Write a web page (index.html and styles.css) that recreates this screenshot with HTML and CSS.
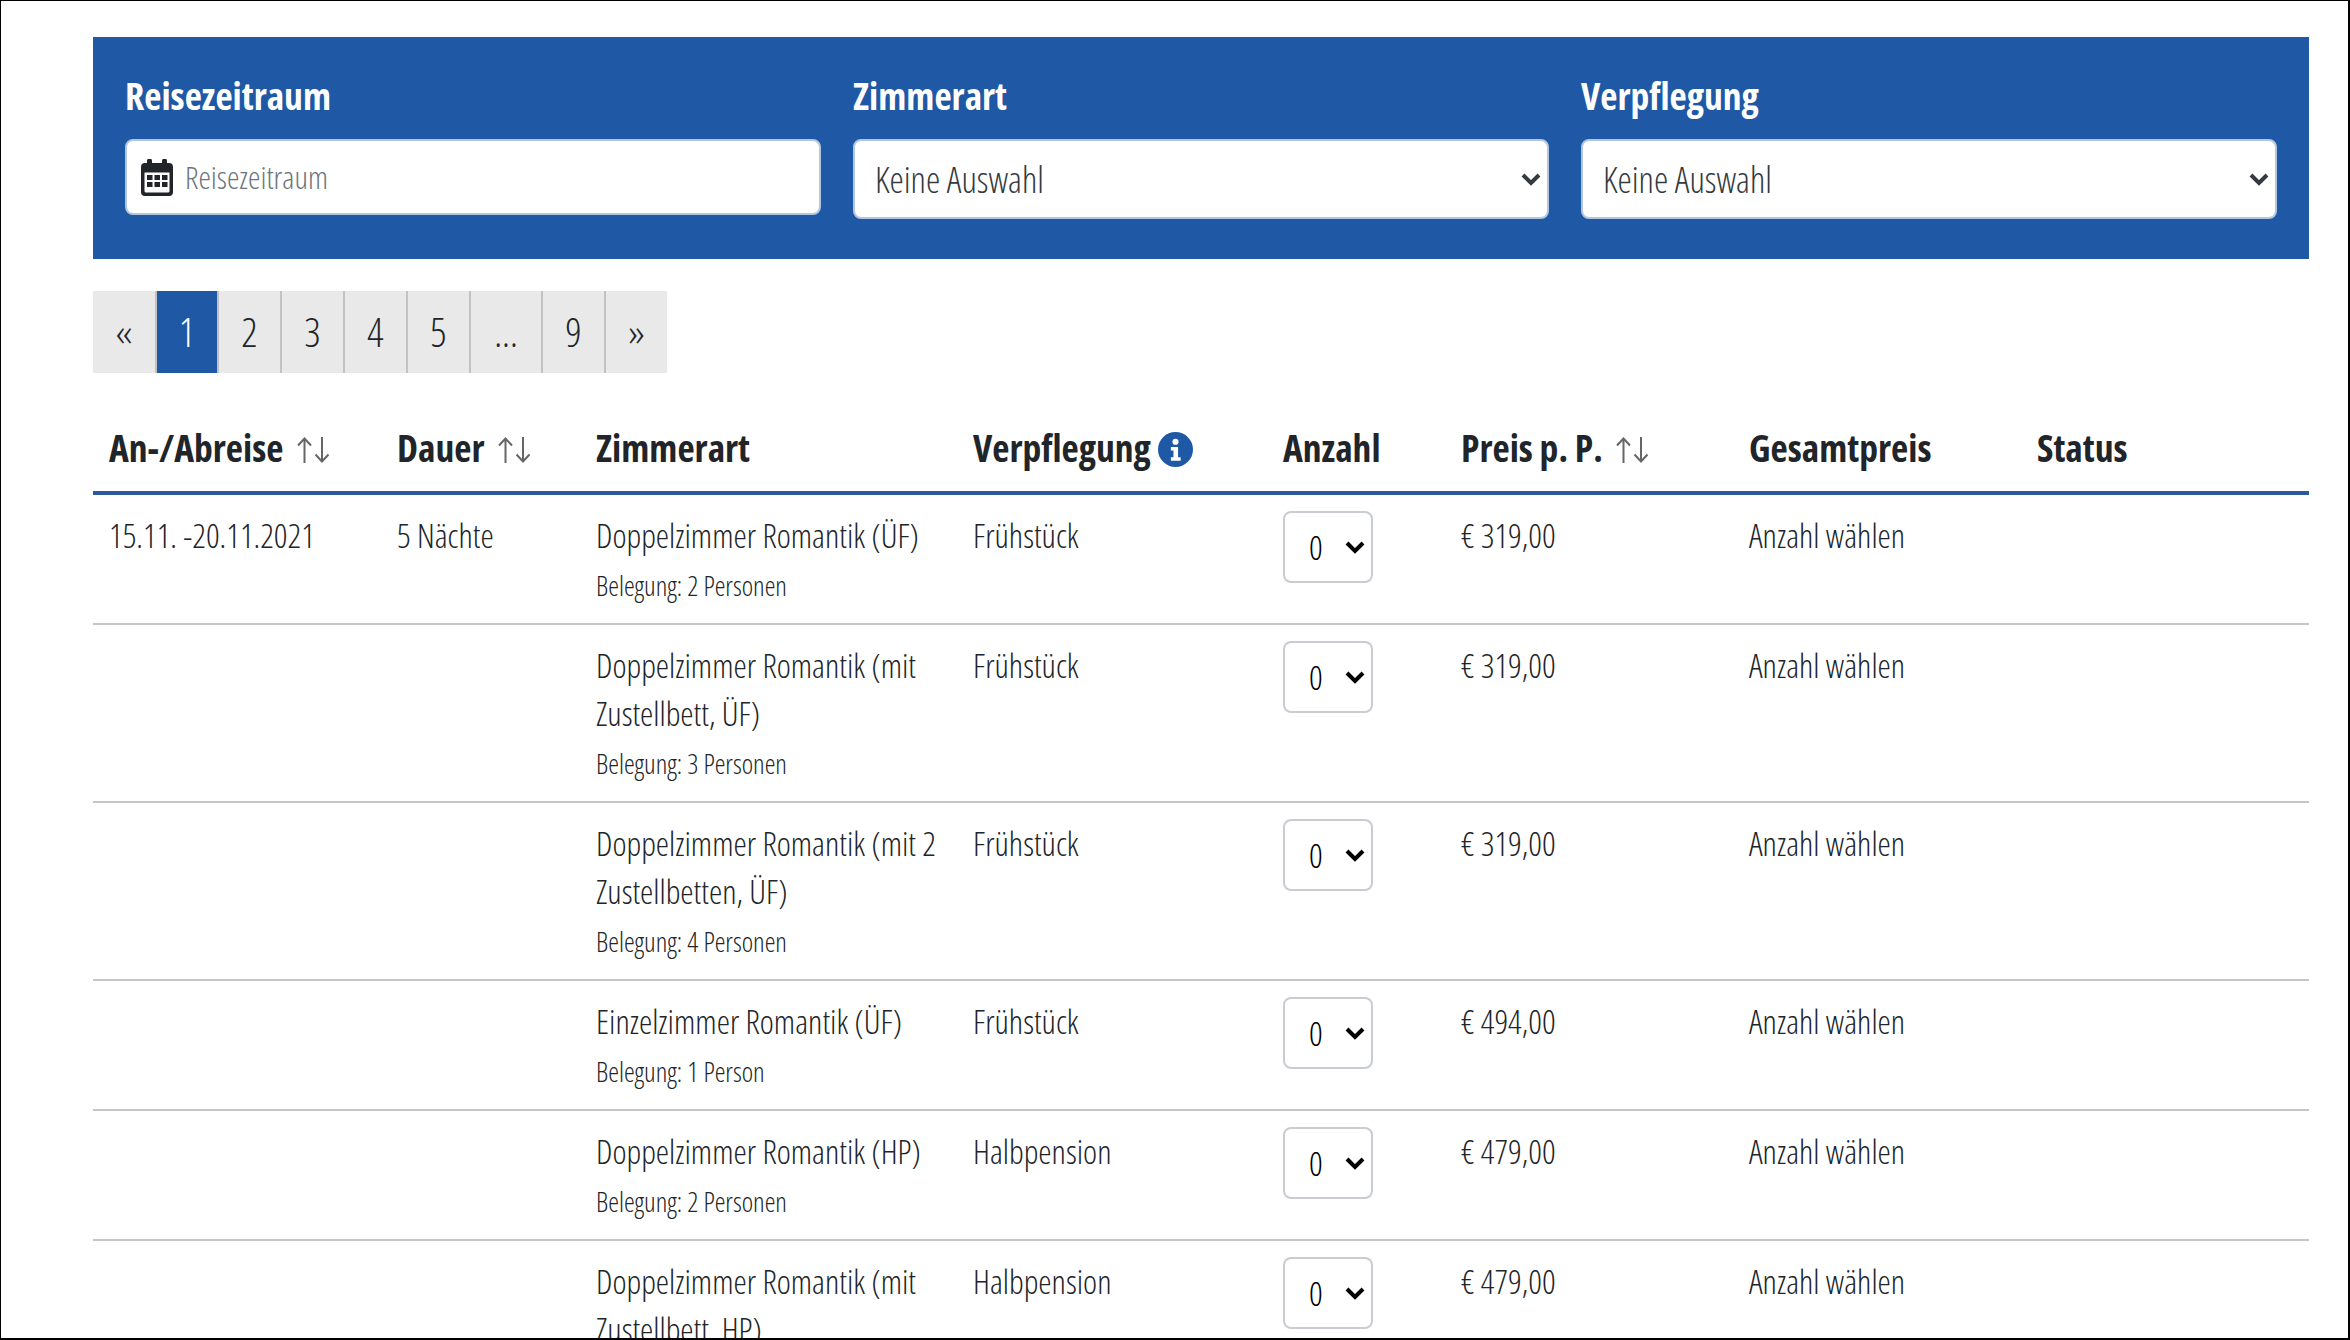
FILE: index.html
```html
<!DOCTYPE html>
<html lang="de">
<head>
    <meta charset="UTF-8">
    <title>Reisezeitraum</title>
    <link rel="stylesheet" href="styles.css">
</head>
<body>
    <div class="container">
        <form class="filter">
            <div class="filter-col">
                <label for="zeitraum">Reisezeitraum</label>
                <div class="date-input">
                    <svg class="cal-icon" viewBox="0 0 32 37"><path fill-rule="evenodd" d="M6 2a2.500 2.500 0 0 1 5 0v2h10V2a2.500 2.500 0 0 1 5 0v2h2a4 4 0 0 1 4 4v25a4 4 0 0 1-4 4H4a4 4 0 0 1-4-4V8a4 4 0 0 1 4-4h2V2zM3.500 13.500V32a1.500 1.500 0 0 0 1.500 1.500h22a1.500 1.500 0 0 0 1.500-1.500V13.500h-25zM6 16h5.500v5H6zm7.500 0H19v5h-5.500zM21 16h5.500v5H21zM6 23h5.500v5H6zm7.500 0H19v5h-5.500zM21 23h5.500v5H21z"/></svg>
                    <input id="zeitraum" type="text" placeholder="Reisezeitraum">
                </div>
            </div>
            <div class="filter-col">
                <label for="zimmerart">Zimmerart</label>
                <select id="zimmerart" class="filter-select"><option>Keine Auswahl</option></select>
            </div>
            <div class="filter-col">
                <label for="verpflegung">Verpflegung</label>
                <select id="verpflegung" class="filter-select"><option>Keine Auswahl</option></select>
            </div>
        </form>

        <ul class="pagination">
            <li>«</li>
            <li class="active">1</li>
            <li>2</li>
            <li>3</li>
            <li>4</li>
            <li>5</li>
            <li class="wide">...</li>
            <li>9</li>
            <li>»</li>
        </ul>

        <table class="offers">
            <colgroup>
                <col class="c-date"><col class="c-dauer"><col class="c-zimmer"><col class="c-verpf">
                <col class="c-anzahl"><col class="c-preis"><col class="c-gesamt"><col class="c-status">
            </colgroup>
            <thead>
                <tr>
                    <th>An-/Abreise <svg class="sort" viewBox="0 0 33 26"><path d="M7.500 26V2M1 8.500l6.500-7 6.500 7M25 0v24M18.500 17.500l6.500 7 6.500-7"/></svg></th>
                    <th>Dauer <svg class="sort" viewBox="0 0 33 26"><path d="M7.500 26V2M1 8.500l6.500-7 6.500 7M25 0v24M18.500 17.500l6.500 7 6.500-7"/></svg></th>
                    <th>Zimmerart</th>
                    <th>Verpflegung <svg class="info" viewBox="0 0 34 34"><circle cx="17" cy="17" r="17"/><circle class="info-i" cx="17" cy="9.500" r="3"/><path class="info-i" d="M12.500 14.500h7v10h2.500v3.500h-9.500v-3.500h2.500v-6.500h-2.500z"/></svg></th>
                    <th>Anzahl</th>
                    <th>Preis p. P. <svg class="sort" viewBox="0 0 33 26"><path d="M7.500 26V2M1 8.500l6.500-7 6.500 7M25 0v24M18.500 17.500l6.500 7 6.500-7"/></svg></th>
                    <th>Gesamtpreis</th>
                    <th>Status</th>
                </tr>
            </thead>
            <tbody>
                <tr>
                    <td>15.11. -20.11.2021</td>
                    <td>5 Nächte</td>
                    <td>Doppelzimmer Romantik (ÜF)<small>Belegung: 2 Personen</small></td>
                    <td>Frühstück</td>
                    <td><select class="qty"><option>0</option></select></td>
                    <td>€ 319,00</td>
                    <td>Anzahl wählen</td>
                    <td></td>
                </tr>
                <tr>
                    <td></td>
                    <td></td>
                    <td>Doppelzimmer Romantik (mit Zustellbett, ÜF)<small>Belegung: 3 Personen</small></td>
                    <td>Frühstück</td>
                    <td><select class="qty"><option>0</option></select></td>
                    <td>€ 319,00</td>
                    <td>Anzahl wählen</td>
                    <td></td>
                </tr>
                <tr>
                    <td></td>
                    <td></td>
                    <td>Doppelzimmer Romantik (mit 2 Zustellbetten, ÜF)<small>Belegung: 4 Personen</small></td>
                    <td>Frühstück</td>
                    <td><select class="qty"><option>0</option></select></td>
                    <td>€ 319,00</td>
                    <td>Anzahl wählen</td>
                    <td></td>
                </tr>
                <tr>
                    <td></td>
                    <td></td>
                    <td>Einzelzimmer Romantik (ÜF)<small>Belegung: 1 Person</small></td>
                    <td>Frühstück</td>
                    <td><select class="qty"><option>0</option></select></td>
                    <td>€ 494,00</td>
                    <td>Anzahl wählen</td>
                    <td></td>
                </tr>
                <tr>
                    <td></td>
                    <td></td>
                    <td>Doppelzimmer Romantik (HP)<small>Belegung: 2 Personen</small></td>
                    <td>Halbpension</td>
                    <td><select class="qty"><option>0</option></select></td>
                    <td>€ 479,00</td>
                    <td>Anzahl wählen</td>
                    <td></td>
                </tr>
                <tr>
                    <td></td>
                    <td></td>
                    <td>Doppelzimmer Romantik (mit Zustellbett, HP)<small>Belegung: 3 Personen</small></td>
                    <td>Halbpension</td>
                    <td><select class="qty"><option>0</option></select></td>
                    <td>€ 479,00</td>
                    <td>Anzahl wählen</td>
                    <td></td>
                </tr>
            </tbody>
        </table>
    </div>
</body>
</html>
```

FILE: styles.css
```css
:root {
    --primary-color: #1f59a5;
    --text-color: #212529;
    --border-color: #c4c6c8;
    --page-item-bg: #e9e9e9;
}
html {
    height: 1340px;
    overflow: hidden;
}
body {
    height: 1340px;
    margin: 0;
    overflow: hidden;
    box-sizing: border-box;
    border: 2px solid #000;
    border-width: 1px 2px 2px 1px;
    font-family: "Open Sans", sans-serif;
    font-stretch: 75%;
    font-weight: 300;
    font-size: 33.6px;
    line-height: 48px;
    color: var(--text-color);
}
.container {
    padding: 36px 39px 0 92px;
}
.filter {
    display: grid;
    grid-template-columns: repeat(3, 1fr);
    gap: 32px;
    height: 222px;
    box-sizing: border-box;
    padding: 32px;
    background: var(--primary-color);
}
.filter-col label {
    display: block;
    height: 70px;
    font-size: 37.6px;
    line-height: 54px;
    font-weight: 700;
    color: #fff;
}
.date-input {
    display: flex;
    align-items: center;
    gap: 12px;
    height: 76px;
    box-sizing: border-box;
    padding: 0 14px;
    background: #fff;
    border: 2px solid #b3c6e0;
    border-radius: 8px;
}
.cal-icon {
    width: 32px;
    height: 37px;
    flex: none;
    fill: #212529;
}
.date-input input {
    flex: 1;
    min-width: 0;
    border: none;
    outline: none;
    padding: 0;
    font: inherit;
    font-size: 31.5px;
    font-stretch: 75%;
}
.date-input input::placeholder {
    color: #6c757d;
    opacity: 1;
}
.filter-select {
    display: block;
    width: 100%;
    height: 80px;
    padding: 2px 20px 0;
    background: #fff;
    border: 2px solid #b3c6e0;
    border-radius: 8px;
    font: inherit;
    font-size: 36px;
    font-stretch: 75%;
    color: #343a40;
    appearance: none;
    background-image: url("data:image/svg+xml,%3Csvg xmlns='http://www.w3.org/2000/svg' viewBox='0 0 20 14'%3E%3Cpath d='M2 3l8 8 8-8' fill='none' stroke='%23343a40' stroke-width='4'/%3E%3C/svg%3E");
    background-repeat: no-repeat;
    background-position: right 6px center;
    background-size: 20px 14px;
}
.pagination {
    display: flex;
    width: max-content;
    height: 82px;
    margin: 32px 0 34px;
    padding: 0;
    list-style: none;
}
.pagination li {
    width: 63px;
    box-sizing: border-box;
    text-align: center;
    line-height: 82px;
    font-size: 40px;
    background: var(--page-item-bg);
    border-left: 2px solid #c2c2c2;
}
.pagination li:first-child {
    width: 62px;
    border-left: none;
}
.pagination .active {
    width: 62px;
    background: var(--primary-color);
    color: #fff;
}
.pagination .wide {
    width: 72px;
}
.offers {
    width: 2216px;
    table-layout: fixed;
    border-collapse: collapse;
}
.c-date { width: 288px; }
.c-dauer { width: 199px; }
.c-zimmer { width: 377px; }
.c-verpf { width: 310px; }
.c-anzahl { width: 178px; }
.c-preis { width: 288px; }
.c-gesamt { width: 288px; }
.c-status { width: 288px; }
.offers th {
    height: 82px;
    padding: 0 16px 2px;
    text-align: left;
    font-size: 37.6px;
    font-weight: 700;
    line-height: 54px;
    white-space: nowrap;
    border-bottom: 4px solid #2a5a9b;
}
.offers td {
    padding: 16px;
    vertical-align: top;
    border-bottom: 2px solid var(--border-color);
}
.offers small {
    display: block;
    margin-top: 6px;
    font-size: 27.2px;
    line-height: 42px;
}
.sort {
    width: 33px;
    height: 26px;
    margin-left: 7px;
    vertical-align: -1px;
    fill: none;
    stroke: #666;
    stroke-width: 2;
}
.info {
    width: 35px;
    height: 35px;
    vertical-align: -5px;
    fill: var(--primary-color);
}
.info .info-i {
    fill: #fff;
}
.qty {
    display: block;
    width: 90px;
    height: 72px;
    padding: 0 0 0 24px;
    background: #fff;
    border: 2px solid #c9ccd0;
    border-radius: 8px;
    font: inherit;
    font-stretch: 75%;
    color: #000;
    appearance: none;
    background-image: url("data:image/svg+xml,%3Csvg xmlns='http://www.w3.org/2000/svg' viewBox='0 0 20 14'%3E%3Cpath d='M2 3l8 8 8-8' fill='none' stroke='%23000' stroke-width='4'/%3E%3C/svg%3E");
    background-repeat: no-repeat;
    background-position: right 6px center;
    background-size: 20px 14px;
}
```
